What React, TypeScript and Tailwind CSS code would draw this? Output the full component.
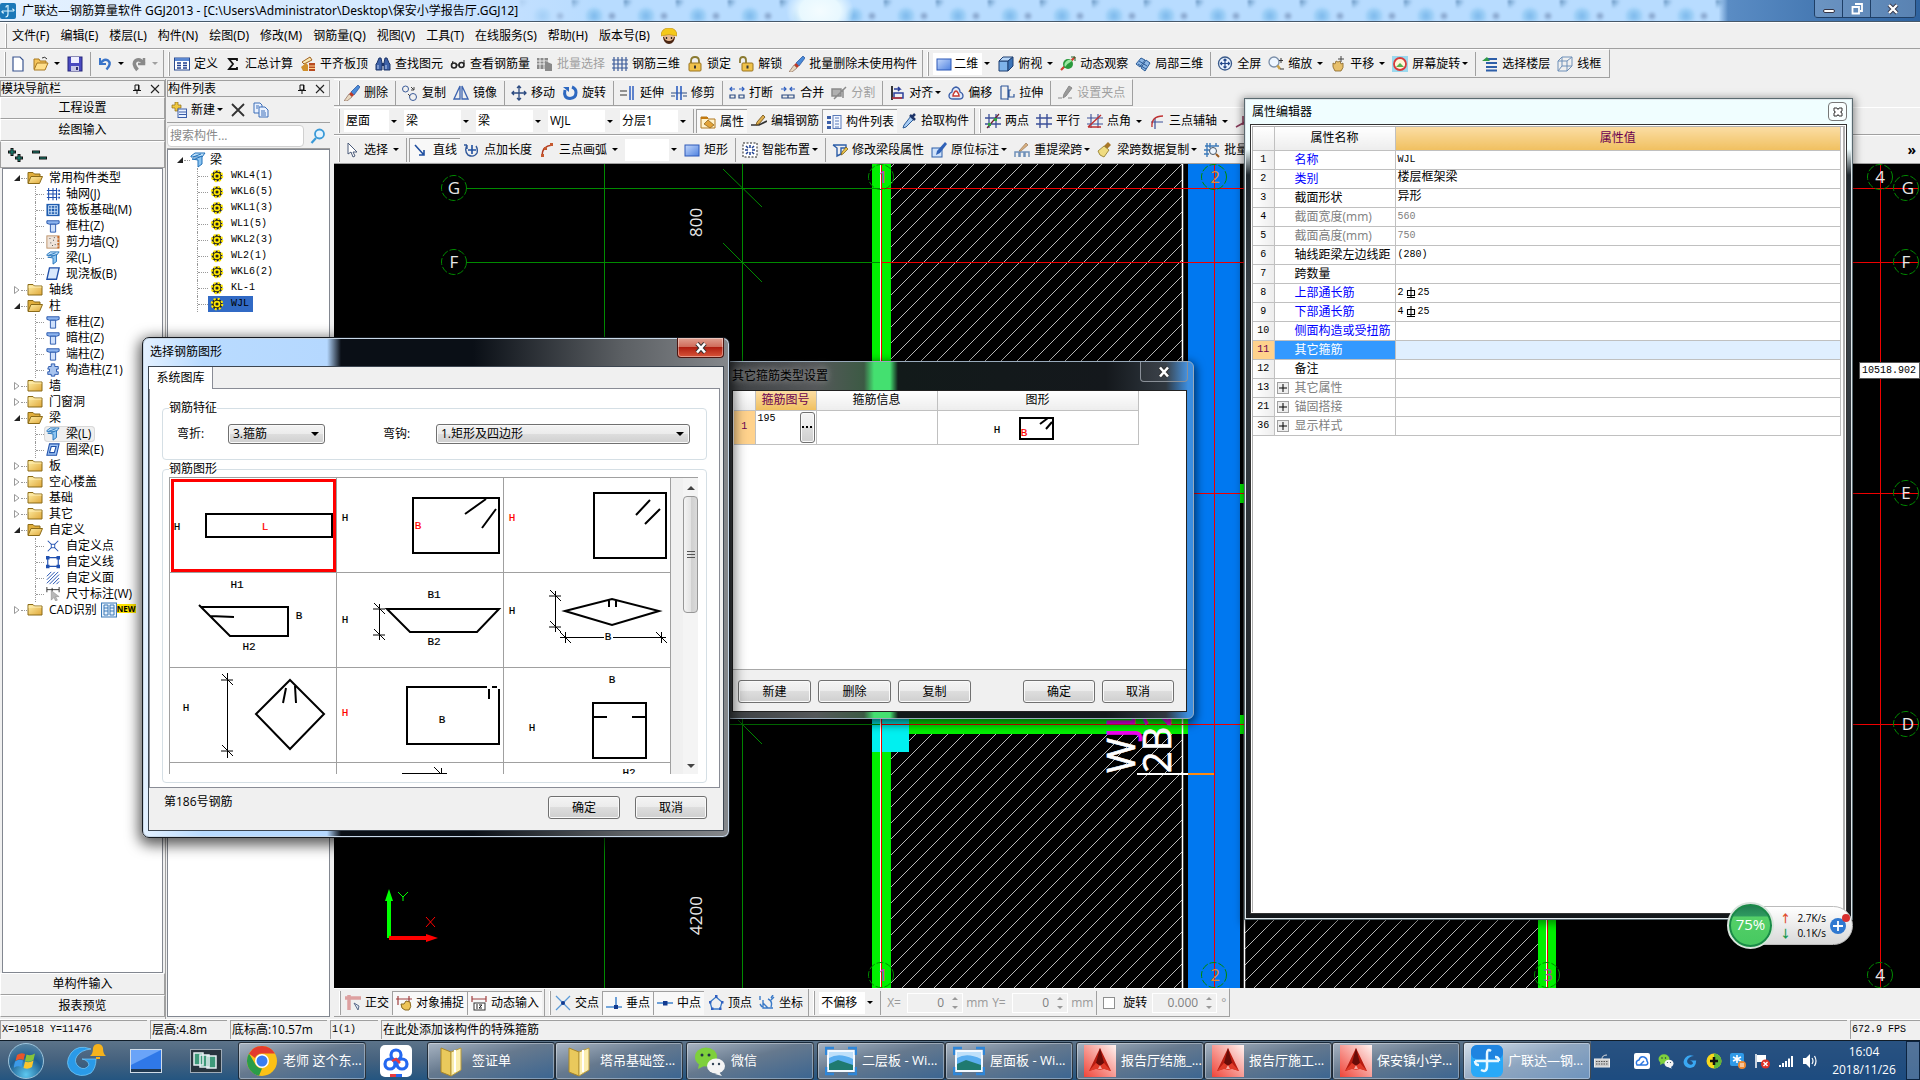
import React, { useState } from "react";
import type { ReactNode } from "react";

const blue = "#2f5fc0";
const L = (d: string, c = "#1f3f8f", w = 1.3) => <path d={d} stroke={c} strokeWidth={w} fill="none" />;

const icons: Record<string, ReactNode> = {
  logo: (<><rect width="16" height="16" rx="2" fill="#1b78b8" /><path d="M8 2.500q-2 0-2 2M8 2v9q0 3-2.500 3M2 8h12M2 8q0 2 2 2M14 8q0-2-2-2" stroke="#d6f2ff" strokeWidth="1.200" fill="none" /></>),
  new: <path d="M3 1h7l3 3v11H3z" fill="#fff" stroke="#3a5590" strokeWidth="1.200" />,
  open: (<><path d="M1 13V3h5l1 2h6v3" fill="#f5c45a" stroke="#a87820" /><path d="M1 14l3-7h11l-3 7z" fill="#ffdf8a" stroke="#a87820" /><path d="M9 2q3-2 5 1" stroke="#333" fill="none" /></>),
  save: (<><rect x="1" y="1" width="14" height="14" fill="#4a4ac0" stroke="#25257a" /><rect x="4" y="1" width="8" height="6" fill="#eef" /><rect x="4" y="10" width="8" height="5" fill="#c8c8e8" /><rect x="9" y="11" width="2" height="3" fill="#336" /></>),
  undo: (<><path d="M3 2v6h6" stroke="#3a74c8" strokeWidth="2" fill="none" /><path d="M3 8q4-6 8-3.500q4 3-1.500 9" stroke="#3a74c8" strokeWidth="2.400" fill="none" /></>),
  redo: (<><path d="M13 2v6H7" stroke="#8a8a8a" strokeWidth="2.500" fill="none" /><path d="M13 8Q9 2 5 4.500Q1 7.500 6.500 14" stroke="#8a8a8a" strokeWidth="3.500" fill="none" /></>),
  define: (<><rect x="0.500" y="2" width="15" height="12" fill="#fff" stroke="#2a4a90" /><rect x="1" y="2" width="14" height="3" fill="#5a86d0" />{L("M3 7h4M3 9.500h4M3 12h4M9 7h4M9 9.500h4M9 12h4")}</>),
  sigma: <path d="M12 5V3H4l4 5-4 5h8v-2" stroke="#111" strokeWidth="1.800" fill="none" />,
  flat: (<><path d="M2 6l8-5 2 3-8 4z" fill="#f7e7b0" stroke="#a06020" /><path d="M1 11l5-4 2 2v6H3z" fill="#d0902c" /><rect x="9" y="7" width="6" height="8" fill="#b84a20" /><path d="M9 10h6M9 12.500h6" stroke="#ffd28c" /></>),
  find: (<><path d="M2 7l2-5h2l1 5v7H1V8zM14 7l-2-5h-2L9 7v7h6V8z" fill="#3e62a8" stroke="#1c3468" /><path d="M7 7h2v3H7z" fill="#1c3468" /><path d="M3 9v4M11 9v4" stroke="#bcd0f4" /></>),
  glasses: (<><circle cx="4" cy="9.500" r="2.500" fill="none" stroke="#222" strokeWidth="1.600" /><circle cx="11.500" cy="9" r="2.500" fill="none" stroke="#222" strokeWidth="1.600" /><path d="M6.500 9h2.500M14 8V4M2 8l1-3" stroke="#222" /></>),
  batchsel: (<><path d="M0 2h11v11H0z" fill="#8a8a8a" /><path d="M0 5h11M0 8h11M3 2v11M7 2v11" stroke="#eee" /><path d="M8 5v10h7V8z" fill="#8a8a8a" /></>),
  grid3d: L("M2 1v14M6 1v14M10 1v14M14 1v14M0 4h16M0 8h16M0 12h16", "#3b5a98", 1.2),
  lock: (<><path d="M4 8V5q0-4 4-4t4 4v3" stroke="#8a7a30" strokeWidth="1.800" fill="none" /><rect x="2" y="7" width="12" height="8" rx="1" fill="#f0c24a" stroke="#9a7420" /><path d="M8 9.500v3" stroke="#333" strokeWidth="2" /></>),
  unlock: (<><path d="M2 7V4q0-3 3-3t3 3v3" stroke="#8a7a30" strokeWidth="1.800" fill="none" /><rect x="4" y="7" width="11" height="8" rx="1" fill="#f0c24a" stroke="#9a7420" /><path d="M9.500 9.500v3" stroke="#333" strokeWidth="2" /></>),
  broom: (<><path d="M14 0l2 2-6 8-3-3z" fill="#4a8ad8" stroke="#234f9a" strokeWidth="0.700" /><path d="M7 7l3 3-2 2-3-3z" fill="#c03a28" /><path d="M5 9l3 3-5 4H0z" fill="#e8d8c0" stroke="#8b6a5a" strokeWidth="0.700" /></>),
  square: <rect x="1" y="3" width="14" height="11" fill="url(#sqg)" stroke="#2c58b8" />,
  cube: (<><path d="M1 5h9v10H1z" fill="#7fb3ea" stroke="#1f3f70" /><path d="M1 5l4-4h10l-5 4z" fill="#b7d6f7" stroke="#1f3f70" /><path d="M10 5l5-4v9l-5 5z" fill="#3c74b8" stroke="#1f3f70" /></>),
  orbit: (<><path d="M1 14L6 9M10 6l5-5" stroke="#d04030" strokeWidth="2.200" /><circle cx="8" cy="8" r="5" fill="#2a9a3c" /><path d="M5 11Q3 7 8 4q4-1 4 1-4 2-7 6z" fill="#9ae8a0" /><path d="M11 1h4v4" stroke="#206a30" fill="none" /></>),
  part3d: (<><path d="M1 8l5-6 4 2-5 7zM6 12l5-8 4 3-5 8z" fill="#8db6e4" stroke="#2b5c98" /><path d="M4 5l8 5M3 8l8 5" stroke="#2b5c98" /></>),
  full: (<><circle cx="8" cy="7.500" r="6.500" fill="#eaf3ff" stroke="#3a5a8a" strokeWidth="1.300" /><path d="M8 3v9M3.500 7.500h9M6.500 4.500L8 3l1.500 1.500M6.500 10.500L8 12l1.500-1.500M5 6L3.500 7.500 5 9M11 6l1.500 1.500L11 9" stroke="#24488a" fill="none" strokeWidth="1.200" /></>),
  zoom: (<><circle cx="6" cy="6" r="5" fill="#eef6ff" stroke="#7a8ea8" strokeWidth="1.300" /><path d="M9.500 9.500L12 13" stroke="#caa24a" strokeWidth="2.500" /><path d="M13 2v5M11 4.500h4M12 13h4" stroke="#333" /></>),
  pan: (<><path d="M3 7q-1 4 2 8h6q3-3 2-8l-2 1-1-3-2 1-2-1-1 3z" fill="#e7bf6a" stroke="#87652a" strokeWidth="0.800" /><path d="M11 0v6M8 3h6" stroke="#444" /></>),
  rotscr: (<><rect width="16" height="16" fill="#9ad8ee" /><circle cx="8" cy="8" r="6" fill="#fff7d8" stroke="#d83a3a" strokeWidth="1.800" /><path d="M4 11l4-4 4 4z" fill="#58b050" /></>),
  floors: (<><path d="M4 2h11v2H4zM4 6h11v2H4zM4 10h11v2H4zM4 13.500h11v2H4z" fill="#2d5ea8" /><path d="M0 5l5-4 3 4z" fill="#2f9a48" /></>),
  wire: L("M1 5h9v10H1zM1 5l4-4h10l-5 4M15 1v9l-5 5M5 1v9h10M5 10l-4 5", "#6f90b8", 1),
  copy: (<><circle cx="3.500" cy="4" r="3" fill="none" stroke="#3a5a98" /><circle cx="11" cy="12" r="3.500" fill="none" stroke="#3a5a98" /><path d="M6 9l2 2M9 2l3 3h-3M12 5V2" stroke="#444" fill="none" /></>),
  mirror: L("M7 1v13H1zM9 1v13h6z", "#3d64b0", 1.3),
  move: L("M8 1v14M1 8h14M6 3l2-2 2 2M6 13l2 2 2-2M3 6L1 8l2 2M13 6l2 2-2 2", "#2b4a80", 1.3),
  rotate: (<><path d="M3 5q-2 8 5 8.500 6-.5 6-6 0-4-4-5.500" stroke="#2d68c0" strokeWidth="3" fill="none" /><path d="M1 2h6v5z" fill="#2d68c0" /></>),
  extend: (<>{L("M0 6h7M0 10h7", "#333", 1.2)}{L("M10 1v14M13 1v14", blue, 1.5)}</>),
  trim: (<>{L("M0 8h16M0 11h4M12 11h4", "#2b4a80", 1.2)}{L("M6 1v14M10 1v14", blue, 1.6)}</>),
  brk: (<>{L("M1 4h5M3 2L1 4l2 2M10 4h5M13 2l2 2-2 2", blue, 1.2)}{L("M1 10h5v3H1zM10 10h5v3h-5z", "#2b4a80", 1.2)}</>),
  merge: (<>{L("M1 4h5M4 2l2 2-2 2M10 4h5M12 2l-2 2 2 2", blue, 1.2)}{L("M2 10h6v3H2zM8 10h6v3H8z", "#2b4a80", 1.2)}</>),
  split: <path d="M1 4h9v7H1zM3 14L15 2M12 4v9" stroke="#8a8a8a" fill="#b0b0b0" strokeWidth="1.500" />,
  align: (<>{L("M3 1v14", "#222", 1.8)}{L("M5 8h9v5H5zM5 4h6l-2-2M11 4L9 6", "#2b3f9a", 1.5)}{L("M3 13h10", "#c03030", 1.5)}</>),
  offset: (<><path d="M1 11q0-3 3-4 0-4 4-5 4 1 4 5 3 1 3 4 0 3-4 3H5q-4 0-4-3z" fill="#dfe9fa" stroke="#3c5fa8" strokeWidth="1.300" /><path d="M5 11q0-2 1-3 1-2 2-2t2 2q1 1 1 3z" fill="#fff" stroke="#c83a30" strokeWidth="1.500" /></>),
  stretch: L("M2 1h7v3M2 1v13h7M12 5l-2 0v7h5v-3M9 1v14", "#2f579a", 1.2),
  grip: <path d="M1 13h4M11 13h4M12 1l3 2-6 8-3 2 1-4z" stroke="#8a8a8a" fill="#9a9a9a" />,
  prop: (<><path d="M1 14V3h6l1 2h7v9z" fill="#fff2cc" stroke="#b07820" /><path d="M1 4h7" stroke="#c47a10" strokeWidth="2" /><path d="M4 10l4-4 6 5-4 3z" fill="#e2a33a" stroke="#855a10" strokeWidth="0.700" /></>),
  editbar: (<><path d="M0 12h8l8-4" stroke="#333" strokeWidth="1.600" fill="none" /><path d="M12 2l2 2-6 7-3 1 1-3z" fill="#e0b050" stroke="#6a4a10" strokeWidth="0.800" /></>),
  list: (<><path d="M1 2h4v3H1zM1 7h4v3H1zM1 12h4v3H1z" fill="#3c5fa8" /><rect x="7" y="1.500" width="8" height="13" fill="#f3f7ff" stroke="#5a7ab8" />{L("M9 4h4M9 7h4M9 10h4M9 13h4", "#5a7ab8", 1)}</>),
  pick: (<><path d="M10 3l3 3-8 8-3 1 1-3z" fill="#a8ccf4" stroke="#2b5c98" /><path d="M9 2l5 5M11 4l3-3" stroke="#1c3468" strokeWidth="2.500" /></>),
  two: (<>{L("M4 1v14M11 1v14M0 5h16M0 11h16", "#3b4f98", 1.3)}{L("M2 15L14 1", "#6a2030", 1.2)}<path d="M9 5h3v3H9zM3 10h3v3H3z" fill="#30a040" /></>),
  parallel: L("M4 1v14M11 1v14M0 5h16M0 11h16", "#3b4f98", 1.4),
  angle: (<>{L("M4 1v14M11 1v14M0 5h16M0 11h16", "#3b4f98", 1.1)}{L("M1 14L14 2M1 14h13", "#c03030", 1.4)}</>),
  arcaxis: (<>{L("M2 9h12M6 5v11", "#3b4f98", 1.2)}{L("M3 14Q2 3 14 3", "#c03030", 1.4)}</>),
  delaxis: L("M1 14L10 9M8 12V3", "#8a3a5a", 1.5),
  cursor: <path d="M4 1v11l3-2 2 5 2-1-2-4h4z" fill="#fff" stroke="#4a5a78" />,
  line: (<>{L("M2 3l9 10M11 8v5H6", "#1f4fa0", 1.6)}</>),
  ptlen: (<>{L("M8 3v9M4 8h8", "#1f4fa0", 1.6)}{L("M3 3Q0 9 4 13q6 3 9-2 1-4-1-7M3 3v4M3 3H0", "#2f579a", 1.4)}</>),
  arc: (<>{L("M3 14Q3 4 13 3", "#b03a20", 1.6)}<path d="M2 12h3v3H2zM11 1h3v3h-3zM5 5h3v3H5z" fill="#c65a30" /></>),
  smart: (<><rect x="1" y="1" width="14" height="14" fill="#fff" stroke="#222" strokeDasharray="2 1.500" /><path d="M8 3v3M8 10v3M3 8h3M10 8h3M4 4l2 2M12 4l-2 2M4 12l2-2M12 12l-2-2" stroke="#1f3f8f" strokeWidth="1.500" /></>),
  modbeam: (<>{L("M1 3h13v3H9v6l-4 2V6L1 3", "#2d5ea8", 1.4)}<path d="M14 5l2 2-5 5-2 1 1-3z" fill="#e8c24a" stroke="#735410" strokeWidth="0.700" /></>),
  note: (<><rect x="1" y="6" width="10" height="9" fill="#cfe2fa" stroke="#2d5ea8" /><path d="M14 0l2 2-7 9-4 2 1-4z" fill="#2f62b8" /></>),
  respan: (<>{L("M1 15v-5h4v5M6 15v-5h4v5M11 15v-5h4v5", "#6f90b8", 1.5)}<path d="M12 1l2 2-7 6-2 0z" fill="#d9b080" stroke="#8a6a4a" strokeWidth="0.600" /></>),
  paint: (<><path d="M11 0l3 3-4 4-3-3z" fill="#a87828" /><path d="M7 4l5 4-5 7q-5-1-6-6z" fill="#f0dc80" stroke="#8b7628" strokeWidth="0.800" /></>),
  recog: (<>{L("M1 4h14M3 1v14M6 1v5M12 1v3M0 8h6M0 12h5", "#3c79b8", 1.4)}<circle cx="9" cy="9" r="3.500" fill="#eef6ff" stroke="#456" /><path d="M12 12l3 3" stroke="#9a5a20" strokeWidth="2" /></>),
  ortho: (<><path d="M0 3h16M4 0v15" stroke="#dda0a0" strokeWidth="3.500" /><path d="M9 8l4 7 1-4z" fill="#e0e8f4" stroke="#5a6a88" /></>),
  snap: (<>{L("M2 1v9M13 1v9M0 4h16", "#a04040", 1.2)}<path d="M5 9q0 5 4 6h4q3-3 1-8l-4-1-2 3z" fill="#edc458" stroke="#8a6a20" /></>),
  dyn: (<>{L("M1 1v6M15 1v6M1 4h14", "#a04040", 1.2)}<rect x="3" y="8" width="11" height="7" fill="#fff" stroke="#333" />{L("M6 9v5M8 10h3l-3 3h3", "#222", 1)}</>),
  cross: (<>{L("M1 1l14 14M15 1L1 15", "#5a9ad8", 1.3)}<circle cx="8" cy="8" r="2" fill="#123a90" /></>),
  perp: (<>{L("M0 12h16M10 2v10", "#4a8ad0", 1.6)}<rect x="8" y="10" width="4" height="4" fill="#123a90" /></>),
  mid: (<>{L("M0 8h16", "#4a8ad0", 1.6)}<rect x="6" y="6" width="4.500" height="4.500" fill="#123a90" /></>),
  vertex: (<>{L("M8 2l6 5-2 7H4L2 7z", "#3a7ac8", 1.3)}<path d="M7 0h2.500v3H7zM1 6h2.500v2.500H1zM13 6h2.500v2.500H13zM3 12.500h2.500V15H3zM11 12.500h2.500V15H11z" fill="#2f5fc0" /></>),
  coord: L("M4 5v8h10M4 8l5 5M9 4q5 2 3 8M1 1v4M14 0l-2 3M1 9l2 3M12 5l3-3", "#3a7ac8", 1.4),
  folder: (<><path d="M1 13V2.500h5L7.500 4H15v9z" fill="url(#fog)" stroke="#8a6a18" /><path d="M1.500 5h13" stroke="#fff0b8" /></>),
  folderOpen: (<><path d="M1 13V2.500h5L7.500 4H13v3" fill="#e0ae3c" stroke="#8a6a18" /><path d="M1 13.500l3-7h11.500l-3 7z" fill="url(#fog)" stroke="#8a6a18" /></>),
  axisgrid: (<>{L("M3 1v14M8 1v14M12 1v14M1 4h12M1 8h12M1 12h12", "#2050b0", 1.2)}<path d="M14 3h2v2h-2zM14 7h2v2h-2zM14 11h2v2h-2z" fill="#2050b0" /></>),
  raft: (<><rect x="0.500" y="1" width="15" height="14" fill="#1f5cae" /><path d="M3 3h10v10H3zM6 3v10M10 3v10M3 6h10M3 10h10" stroke="#d8ecff" fill="none" /></>),
  column: (<><path d="M1 2h14v3l-3 1H4L1 5z" fill="#8db4ee" stroke="#1f4fa8" /><path d="M5 6h6v9H5z" fill="#cfe0fb" stroke="#1f4fa8" /></>),
  wall: (<><rect x="1" y="1" width="14" height="14" fill="#efe4da" stroke="#b88a60" /><path d="M4 4h1M8 6h1M5 9h1M10 11h1M7 12h1M9 3h1" stroke="#333" /><path d="M14 1v14" stroke="#c86a28" strokeWidth="2" strokeDasharray="3 1" /></>),
  beam: (<><path d="M1 4l4-3h10l-3 4H1z" fill="#bfe0fa" stroke="#2070b8" /><path d="M5 7l7-3v8l-4 3V8L2 7z" fill="#8cc4f0" stroke="#2070b8" /><path d="M3 5l8-3" stroke="#2070b8" /></>),
  slab: <path d="M4 1h11l-3 13H1z" fill="#d8e8fc" stroke="#1f4fa8" strokeWidth="1.500" />,
  ring: <path d="M4 1h11l-3 13H1zM6 4h5.500l-2 7H4z" fill="#9fc4f4" fillRule="evenodd" stroke="#1f4fa8" strokeWidth="1.200" />,
  struct: <path d="M3 4h3V1h4v3h4v3h-2v3h2v3h-4v2H6v-2H2v-3h2V7H2z" fill="#a8c4ee" stroke="#1f4fa8" />,
  cpoint: (<>{L("M2 2l12 12M14 2L2 14", "#2050b0", 1.2)}<rect x="6" y="6" width="4" height="4" fill="#fff" stroke="#2050b0" /></>),
  cline: (<>{L("M2 3h12v10H2z", "#2050b0", 1.3)}<path d="M0 1h4v4H0zM12 1h4v4h-4zM0 11h4v4H0zM12 11h4v4h-4z" fill="#2050b0" /></>),
  carea: L("M1 6l5-5M1 10l9-9M1 14l13-13M4 15l11-11M8 15l7-7M12 15l3-3", "#2050b0", 1.1),
  dim: (<>{L("M1 0v6M15 0v6M1 3h14M7 1v4", "#222", 1)}<path d="M6 4v11l3-3 2 4 2-1-2-4h4z" fill="#b8b8b8" stroke="#888" strokeWidth="0.600" /></>),
  gear: (<><circle cx="8" cy="8" r="5" fill="#ffe800" stroke="#222" strokeWidth="2.400" /><circle cx="8" cy="8" r="6" fill="none" stroke="#ffe800" strokeWidth="2.400" strokeDasharray="2.400 2.310" /><circle cx="8" cy="8" r="1.800" fill="#222" /></>),
  addcomp: (<><path d="M4 0h3v3h3v3H7v3H4V6H1V3h3z" fill="#f0c840" stroke="#8a6a18" strokeWidth="0.700" /><rect x="7" y="7" width="8.500" height="8.500" fill="#eaf2ff" stroke="#3c5fa8" />{L("M8 10h7M8 12.500h7", "#3c5fa8", 1)}</>),
  delx: L("M2 2l12 12M14 2L2 14", "#333", 1.8),
  pages: (<><path d="M1 1h6l2 2v8H1z" fill="#eaf2ff" stroke="#3c6fb8" /><path d="M6 5h6l3 3v7H6z" fill="#eaf2ff" stroke="#3c6fb8" /><path d="M8 9h4M8 11h5M8 13h5M3 4h3M3 6h2" stroke="#3c6fb8" /></>),
  worker: (<><circle cx="8" cy="9" r="6" fill="#e8b890" /><path d="M2 9q1 7 6 7t6-7l-1 0q-1 4-5 4t-5-4z" fill="#4a2614" /><path d="M0 8Q0 0 8 0t8 8l-8-1.500z" fill="#f4c81a" stroke="#b88a10" strokeWidth="0.600" /><path d="M5.500 9v2M10.500 9v2" stroke="#222" strokeWidth="1.300" /></>),
};

function Icon({ n, s = "size-4" }: { n: string; s?: string }) {
  return <svg viewBox="0 0 16 16" className={`${s} shrink-0`} aria-hidden="true">{icons[n]}</svg>;
}
const Arrow = ({ c = "border-t-black" }: { c?: string }) => (
  <span className={`inline-block h-0 w-0 shrink-0 border-x-[3px] border-t-[3px] border-x-transparent ${c}`} />
);
const Sep = () => <span className="mr-1.5 h-6 w-px shrink-0 bg-[#a0a0a0]" />;
const Edge = () => <span className="-ml-0.5 h-full w-px shrink-0 bg-[#a0a0a0]" />;
const Grip = () => <span className="mx-1 h-6 w-0.5 shrink-0 border-r border-r-[#a0a0a0] bg-white" />;

function Tool({ i, t, arrow, tight, pressed, off }: { i: string; t?: string; arrow?: boolean; tight?: boolean; pressed?: boolean; off?: boolean }) {
  return (
    <button
      disabled={off}
      aria-label={t ?? i}
      className={`flex h-6 shrink-0 items-center gap-1 whitespace-nowrap ${pressed ? "-ml-1 mr-1 border-t border-l border-[#a0a0a0] bg-[#f8f8f8] pl-[3px] pr-[3px]" : "pr-[7px]"} ${off ? "text-[#a0a0a0]" : ""}`}
    >
      <Icon n={i} />
      {t && <span>{t}</span>}
      {arrow && <span className={`flex w-[7px] justify-center ${tight ? "-ml-[3px]" : ""}`}><Arrow c={off ? "border-t-[#a0a0a0]" : "border-t-black"} /></span>}
    </button>
  );
}

function Combo({ label, options, w, gap = "mr-[5px]" }: { label: string; options: string[]; w: string; gap?: string }) {
  return (
    <label className={`relative flex h-[22px] shrink-0 items-center bg-white ${gap} ${w}`}>
      <span className="sr-only">{label}</span>
      <select className="h-[22px] w-full appearance-none bg-transparent pl-0.5 leading-[22px] outline-none">
        {options.map((o) => <option key={o}>{o}</option>)}
      </select>
      <span className="pointer-events-none absolute inset-y-0 right-0 flex w-2.5 items-center justify-center bg-[#f0f0f0]"><Arrow /></span>
    </label>
  );
}

const bar = "flex items-center border-t border-b border-t-white border-b-[#a0a0a0] bg-[#f0f0f0]";
const winBtn = "rounded-[3px] border border-[#707070] bg-[linear-gradient(#f4f4f4_0%,#ebebeb_49%,#dddddd_50%,#cfcfcf_100%)] shadow-[inset_0_0_0_1px_#fafafa]";

function TitleBar() {
  return (
    <header className="relative flex h-[22px] shrink-0 items-center overflow-hidden border-b border-[#46586a] bg-[#b8dcff]">
      <div className="absolute inset-0 bg-[radial-gradient(circle_at_22px_16px,#7db9ec_0,#9acdf6_6px,transparent_10px),radial-gradient(circle_at_0_0,#5a86b4_0,#92bce4_5px,transparent_9px),radial-gradient(circle_at_40px_16px,#7f9cc4_0,transparent_5px)] bg-[length:52px_22px] blur-[1px]" />
      <div className="absolute inset-0 bg-[radial-gradient(ellipse_34px_26px_at_820px_11px,#f4fcff_0,#e8f8ff_60%,transparent_100%),linear-gradient(90deg,#e4f1ff_0,#d4e9ff_20%,#c4e0ff_26%,transparent_31%,transparent_89.500%,#5a8cc4_90%,#2f639f_100%)]" />
      <div className="relative flex items-center gap-1.5"><Icon n="logo" /><h1 className='font-["Noto_Sans","Noto_Sans_CJK_SC",sans-serif] text-xs whitespace-nowrap'>广联达—钢筋算量软件 GGJ2013 - [C:\Users\Administrator\Desktop\保安小学报告厅.GGJ12]</h1></div>
      <div className="absolute top-0 right-1 flex h-[18px] rounded-b border border-t-0 border-[#1f3f66] text-white">
        <button aria-label="最小化" className="flex w-7 items-center justify-center border-r border-[#1f3f66] bg-white/20"><span className="mt-1 h-1 w-3 rounded-sm border border-[#334] bg-white" /></button>
        <button aria-label="还原" className="flex w-7 items-center justify-center border-r border-[#1f3f66] bg-white/20"><svg viewBox="0 0 12 12" className="size-3"><path d="M4 1h7v7H9M1.500 4h6.500v6.500H1.500z" stroke="#fff" strokeWidth="1.800" fill="none" /></svg></button>
        <button aria-label="关闭" className="flex w-11 items-center justify-center bg-white/20"><svg viewBox="0 0 12 12" className="size-3"><path d="M2 2l8 8M10 2l-8 8" stroke="#334" strokeWidth="4" /><path d="M2 2l8 8M10 2l-8 8" stroke="#fff" strokeWidth="2.400" /></svg></button>
      </div>
    </header>
  );
}

const menus = ["文件(F)", "编辑(E)", "楼层(L)", "构件(N)", "绘图(D)", "修改(M)", "钢筋量(Q)", "视图(V)", "工具(T)", "在线服务(S)", "帮助(H)", "版本号(B)"];

type Node = { d: number; i?: string; t: string; open?: boolean; sel?: boolean };
const nav: Node[] = [
  { d: 0, t: "常用构件类型", open: true }, { d: 1, i: "axisgrid", t: "轴网(J)" }, { d: 1, i: "raft", t: "筏板基础(M)" }, { d: 1, i: "column", t: "框柱(Z)" }, { d: 1, i: "wall", t: "剪力墙(Q)" }, { d: 1, i: "beam", t: "梁(L)" }, { d: 1, i: "slab", t: "现浇板(B)" },
  { d: 0, t: "轴线" }, { d: 0, t: "柱", open: true }, { d: 1, i: "column", t: "框柱(Z)" }, { d: 1, i: "column", t: "暗柱(Z)" }, { d: 1, i: "column", t: "端柱(Z)" }, { d: 1, i: "struct", t: "构造柱(Z1)" },
  { d: 0, t: "墙" }, { d: 0, t: "门窗洞" }, { d: 0, t: "梁", open: true }, { d: 1, i: "beam", t: "梁(L)", sel: true }, { d: 1, i: "ring", t: "圈梁(E)" },
  { d: 0, t: "板" }, { d: 0, t: "空心楼盖" }, { d: 0, t: "基础" }, { d: 0, t: "其它" }, { d: 0, t: "自定义", open: true }, { d: 1, i: "cpoint", t: "自定义点" }, { d: 1, i: "cline", t: "自定义线" }, { d: 1, i: "carea", t: "自定义面" }, { d: 1, i: "dim", t: "尺寸标注(W)" },
  { d: 0, t: "CAD识别" },
];

const Expander = ({ open }: { open?: boolean }) => (
  <svg viewBox="0 0 8 10" className="h-2.5 w-2 shrink-0">{open ? <path d="M7 2v6H1z" fill="#222" /> : <path d="M1.500 1.500v7L6 5z" fill="#fff" stroke="#999" />}</svg>
);

function PanelTitle({ t }: { t: string }) {
  return (
    <div className="flex h-[17px] shrink-0 items-center border border-[#a0a0a0] bg-[#f0f0f0]">
      <h2 className="flex-1 text-xs leading-[15px] whitespace-nowrap">{t}</h2>
      <button aria-label="固定" className="mr-2"><svg viewBox="0 0 10 10" className="size-2.5"><path d="M3 1h4v5H3zM1 6.500h8M5 6.500V10M6.500 1v5" stroke="#111" fill="none" /></svg></button>
      <button aria-label="关闭" className="mr-1"><svg viewBox="0 0 10 10" className="size-2.5"><path d="M1 1l8 8M9 1L1 9" stroke="#222" strokeWidth="1.100" /></svg></button>
    </div>
  );
}
const navBtn = "h-[22px] w-full shrink-0 border border-[#a0a0a0] border-t-white border-l-white bg-[#f0f0f0] text-center";

function NavPanel() {
  return (
    <aside className="flex w-[166px] shrink-0 flex-col border-r border-[#a0a0a0] bg-[#f0f0f0] pt-px pb-0.5">
      <PanelTitle t="模块导航栏" />
      <button className={navBtn}>工程设置</button>
      <button className={navBtn}>绘图输入</button>
      <div className="flex h-[27px] shrink-0 items-center gap-1.5 border border-[#a0a0a0] border-t-white pl-1.5">
        <button aria-label="全部展开"><svg viewBox="0 0 18 16" className="h-4 w-[18px]"><path d="M5 1v8M1 5h8M12 7v8M8 11h8" stroke="#111" strokeWidth="3" /><path d="M5 2v6M2 5h6M12 8v6M9 11h6" stroke="#1a8a7a" strokeWidth="1.200" /></svg></button>
        <button aria-label="全部折叠"><svg viewBox="0 0 18 16" className="h-4 w-[18px]"><path d="M1 5h8M8 11h8" stroke="#111" strokeWidth="3" /><path d="M2 5h6M9 11h6" stroke="#1a8a7a" strokeWidth="1.200" /></svg></button>
      </div>
      <ul className="mx-0.5 flex-1 overflow-hidden border border-[#828790] bg-white pt-px">
        {nav.map((n, k) => (
          <li key={k} className="flex h-4 items-center">
            {n.d === 0 ? (
              <button className="flex h-4 items-center pl-2.5"><Expander open={n.open} /><span className="w-1.5 border-b border-dotted border-[#999]" /><Icon n={n.open ? "folderOpen" : "folder"} /><span className="ml-1.5">{n.t}</span>
                {n.t === "CAD识别" && <><svg viewBox="0 0 16 16" className="ml-1 size-4"><rect x="0.500" y="1" width="15" height="14" fill="#e8f2fc" stroke="#3c7ab8" /><path d="M3 3h4v10H3zM9 3h4v10H9zM3 6h4M3 9h4M9 6h4M9 9h4" stroke="#3c7ab8" fill="none" /></svg><b className="mb-1 bg-[#ffe400] text-[8px] leading-[9px]">NEW</b></>}
              </button>
            ) : (
              <span className="ml-8 flex h-4 items-center"><span className="h-4 w-px border-l border-dotted border-[#999]" /><span className="w-2 border-b border-dotted border-[#999]" />
                <button className={`flex h-4 items-center pl-0.5 pr-1 ${n.sel ? "rounded-sm bg-[#f0f0f0] shadow-[inset_0_0_0_1px_#d9d9d9]" : ""}`}><Icon n={n.i!} s="size-3.5" /><span className="ml-1.5 whitespace-nowrap">{n.t}</span></button></span>
            )}
          </li>
        ))}
      </ul>
      <button className={navBtn}>单构件输入</button>
      <button className={navBtn}>报表预览</button>
    </aside>
  );
}

const comps = ["WKL4(1)", "WKL6(5)", "WKL1(3)", "WL1(5)", "WKL2(3)", "WL2(1)", "WKL6(2)", "KL-1", "WJL"];
const mono = 'font-["Liberation_Mono","Noto_Sans_CJK_SC",monospace] text-[10px]';

function ListPanel() {
  const [sel, setSel] = useState("WJL");
  return (
    <aside className="flex w-[168px] shrink-0 flex-col border-r-4 border-r-[#f0f0f0] bg-[#f0f0f0] pt-px pb-0.5 pl-px">
      <PanelTitle t="构件列表" />
      <div className="flex h-[26px] shrink-0 items-center border-b border-[#a0a0a0] pl-1">
        <Tool i="addcomp" t="新建" arrow tight />
        <Tool i="delx" /><Tool i="pages" />
      </div>
      <div className="flex h-[26px] shrink-0 items-center border-b border-[#a0a0a0]">
        <input aria-label="搜索构件" placeholder="搜索构件..." className="h-[22px] w-[137px] rounded-sm border border-[#d0d0d0] bg-white px-0.5 text-xs placeholder:text-[#888]" />
        <button aria-label="搜索" className="ml-1.5"><svg viewBox="0 0 16 16" className="size-4"><circle cx="9.500" cy="6" r="4.500" fill="#e4f4ff" stroke="#3a9ad8" strokeWidth="1.800" /><path d="M6 10l-4.500 5" stroke="#3a9ad8" strokeWidth="2.200" /></svg></button>
      </div>
      <ul className="flex-1 overflow-hidden border border-[#828790] bg-white pt-0.5">
        <li className="flex h-4 items-center pl-2"><Expander open /><span className="w-1.5 border-b border-dotted border-[#999]" /><Icon n="beam" /><span className="ml-1">梁</span></li>
        {comps.map((c) => (
          <li key={c} className="ml-[29px] flex h-4 items-center">
            <span className="h-4 border-l border-dotted border-[#999]" /><span className="w-2.5 border-b border-dotted border-[#999]" />
            <button onClick={() => setSel(c)} className={`flex h-4 items-center gap-[7px] pr-1 pl-0.5 ${mono} ${sel === c ? "bg-[#316ac5]" : ""}`}><Icon n="gear" s="size-3.5" />{c}</button>
          </li>
        ))}
      </ul>
    </aside>
  );
}

function Bubble({ x, y, t, c = "#e8e8e8", dx = 0 }: { x: number; y: number; t: string; c?: string; dx?: number }) {
  return (
    <g>
      <circle cx={x} cy={y} r="12.500" fill="none" stroke="#008a00" strokeDasharray="7 2" />
      <text x={x + dx} y={y + 6} textAnchor="middle" fontSize="17" fill={c}>{t}</text>
    </g>
  );
}

function Canvas() {
  return (
    <div className="relative min-h-0 flex-1 overflow-hidden bg-black">
      <svg className='absolute inset-0 h-full w-full font-["Open_Sans",sans-serif]' aria-label="平面图">
        <defs>
          <pattern id="hatch" width="16" height="16" patternUnits="userSpaceOnUse" patternTransform="translate(2 0)">
            <path d="M-1 17L17 -1M-1 1L1 -1M15 17L17 15" stroke="#b8b8b8" strokeWidth="1" />
          </pattern>
        </defs>
        <g transform="translate(-334 -164)">
          <rect x="891" y="164" width="291" height="824" fill="url(#hatch)" />
          <rect x="1244" y="164" width="294" height="824" fill="url(#hatch)" />
          <rect x="872" y="164" width="19" height="824" fill="#00f000" />
          <rect x="891" y="715" width="353" height="19" fill="#00f000" />
          <rect x="1240" y="484" width="10" height="19" fill="#00f000" />
          <rect x="1538" y="164" width="18" height="824" fill="#00f000" />
          <rect x="1183" y="164" width="61" height="824" fill="#000" />
          <rect x="1182" y="715" width="6" height="19" fill="#00f000" />
          <rect x="1188" y="164" width="52" height="824" fill="#0078f0" />
          <path d="M1182.500 164V988M1244.500 164V988" stroke="#fff" strokeWidth="1.500" />
          <rect x="1240" y="484" width="4" height="19" fill="#00f000" />
          <rect x="1240" y="715" width="4" height="19" fill="#00f000" />
          <rect x="872" y="715" width="37" height="37" fill="#00f0f0" />
          <path d="M604.500 164V988M742.500 164V988M466 188.500H881M466 262.500H881M466 493.500H881M466 724.500H881M723 169L762 207M723 243L762 282M738 720L762 744" stroke="#008a00" fill="none" />
          <path d="M880.500 164V988M1546.500 164V988" stroke="#fff" />
          <path d="M881.500 164V988M1547.500 164V988M1214.500 164V988M1880.500 164V988M882 188.500H1919M882 262.500H1919M882 493.500H1919M882 724.500H1919" stroke="#f00000" />
          <Bubble x={454} y={188} t="G" /><Bubble x={454} y={262} t="F" />
          <Bubble x={881} y={177} t="1" c="#c040d0" dx={2} /><Bubble x={1214} y={177} t="2" c="#e08a30" dx={1} /><Bubble x={1880} y={177} t="4" />
          <Bubble x={1906} y={188} t="G" dx={2} /><Bubble x={1906} y={262} t="F" /><Bubble x={1906} y={493} t="E" /><Bubble x={1906} y={724} t="D" dx={2} />
          <Bubble x={881} y={975} t="1" c="#c040d0" dx={2} /><Bubble x={1214} y={975} t="2" c="#e08a30" dx={1} /><Bubble x={1547} y={975} t="3" c="#a050a0" dx={1} /><Bubble x={1880} y={975} t="4" />
          <text transform="translate(702 237) rotate(-90)" fontSize="17" fill="#e8e8e8">800</text>
          <text transform="translate(702 935) rotate(-90)" fontSize="17" fill="#e8e8e8">4200</text>
          <text transform="translate(1135 773) rotate(-90)" fontSize="38" fill="#fff" stroke="#fff" strokeWidth="0.600">W<tspan fill="#f000f0" stroke="#f000f0">JL</tspan></text>
          <text transform="translate(1171 773) rotate(-90)" fontSize="38" fill="#fff" stroke="#fff" strokeWidth="0.600">2B<tspan fill="#f000f0" stroke="#f000f0">25</tspan></text>
          <path d="M1137 774H1188" stroke="#fff" strokeWidth="2" /><path d="M1188 774h26" stroke="#ff8a10" strokeWidth="2" />
          <path d="M389 938V898" stroke="#0f0" strokeWidth="4" /><path d="M389 889l4 12h-8z" fill="#0f0" />
          <path d="M389 938h38" stroke="#f00" strokeWidth="4" /><path d="M438 938l-12 4v-8z" fill="#f00" />
          <path d="M398 892l5 5 5-5M403 897v4" stroke="#0f0" fill="none" /><path d="M426 917l9 10M435 917l-9 10" stroke="#f00" fill="none" />
        </g>
      </svg>
      <div className={`absolute top-[198px] right-0 h-[17px] w-[61px] border border-[#555] bg-white pl-0.5 leading-[15px] ${mono}`}>10518.902</div>
    </div>
  );
}

const shape = { fill: "none", stroke: "#000", strokeWidth: 2 } as const;
const T = ({ x, y, t, red }: { x: number; y: number; t: string; red?: boolean }) => (
  <text x={x} y={y + 4} textAnchor="middle" fontSize="11" fill={red ? "#f00" : "#000"} stroke={red ? "#f00" : "#000"} strokeWidth="0.200" className='font-["Liberation_Mono",monospace]'>{t}</text>
);
const tickV = (x: number, ys: number[]) => ys.map((y) => `M${x - 6} ${y}h12M${x - 5} ${y - 6}l11 11`).join("");

const shapes: ReactNode[] = [
  <><rect x="36" y="36" width="126" height="23" {...shape} /><T x={7} y={48} t="H" /><T x={95} y={48} t="L" red /></>,
  <><rect x="76" y="20" width="86" height="55" {...shape} /><path d="M128 36L149 21M145 50L159 31" {...shape} /><T x={8} y={39} t="H" /><T x={81} y={47} t="B" red /></>,
  <><rect x="90" y="15" width="72" height="65" {...shape} /><path d="M132 37L146 22M141 46L156 31" {...shape} /><T x={8} y={39} t="H" red /></>,
  <><path d="M29 32L60 63H118V34H31M40 43L64 44" {...shape} /><T x={67} y={11} t="H1" /><T x={129} y={42} t="B" /><T x={79} y={73} t="H2" /></>,
  <><path d="M50 36H162L140 59H73z" {...shape} /><path d={"M42.500 31V67" + tickV(42, [36, 62])} stroke="#000" fill="none" /><T x={97} y={21} t="B1" /><T x={8} y={46} t="H" /><T x={97} y={68} t="B2" /></>,
  <><path d="M61 38L108 26 155 38 108 52zM105 27V34M112 27V34" {...shape} /><path d={"M51.500 18V59M56 64.500H162M61.500 59V70M157.500 59V70M56 59l11 11M152 59l11 11" + tickV(51, [23, 54])} stroke="#000" fill="none" /><rect x="100" y="58" width="9" height="11" fill="#fff" /><T x={8} y={37} t="H" /><T x={104} y={63} t="B" /></>,
  <><path d="M120 12L154 46 120 81 86 46zM116 20L113 35M125 18L126 35" {...shape} /><path d={"M57.500 5V90" + tickV(57, [12, 83])} stroke="#000" fill="none" /><T x={16} y={39} t="H" /></>,
  <><path d="M150 19H70V76H162V21M155 19H160M152 21V31" {...shape} /><T x={8} y={44} t="H" red /><T x={105} y={51} t="B" /></>,
  <><path d="M89 35H142V90H89zM89 49H103M128 49H142" {...shape} /><T x={108} y={11} t="B" /><T x={28} y={59} t="H" /></>,
  <></>,
  <><path d="M65 10.500H110M97 4l8 8M104.500 5V12" stroke="#000" fill="none" /></>,
  <T x={125} y={9} t="H2" />,
];

const CloseX = () => <svg viewBox="0 0 12 12" className="size-3"><path d="M2 1.500l8 9M10 1.500l-8 9" stroke="#333" strokeWidth="4.500" /><path d="M2 1.500l8 9M10 1.500l-8 9" stroke="#fff" strokeWidth="2.600" /></svg>;

function BigSelect({ id, v, w }: { id: string; v: string; w: string }) {
  return (
    <span className={`relative flex ${w}`}>
      <select id={id} className={`h-5 w-full appearance-none pl-1 leading-[18px] ${winBtn}`}><option>{v}</option></select>
      <span className="pointer-events-none absolute top-2 right-1.5 h-0 w-0 border-x-4 border-t-4 border-x-transparent border-t-black" />
    </span>
  );
}

function ShapeDialog() {
  const [sel, setSel] = useState(0);
  return (
    <section role="dialog" aria-label="选择钢筋图形" className="absolute top-[337px] left-[142px] flex h-[501px] w-[588px] flex-col rounded-[7px] border border-[#15191f] bg-[linear-gradient(90deg,#e4f1ff_0,#b9dbff_60px,#b5d8ff_184px,#0a0f16_198px,#0a0f16_330px,#5c6064_480px,#85888c_100%)] px-[5px] pb-1.5 shadow-[inset_0_0_0_1px_#c8d8e8,0_4px_14px_3px_rgba(0,0,0,0.65)]">
      <div className="flex h-7 shrink-0 items-center">
        <h2 className="flex-1 pl-0.5 text-xs">选择钢筋图形</h2>
        <button aria-label="关闭" className="flex h-5 w-[47px] items-center justify-center self-start rounded-b border border-t-0 border-[#4a1510] bg-[linear-gradient(#e0a090_0%,#cf6a58_48%,#b01f10_50%,#d8553a_100%)] shadow-[inset_0_0_0_1px_rgba(255,255,255,0.4)]"><CloseX /></button>
      </div>
      <div className="flex min-h-0 flex-1 flex-col border border-[#3c4550] bg-[#f0f0f0]">
        <div role="tablist" className="relative z-10 -mb-px flex h-[22px] shrink-0"><button role="tab" aria-selected="true" className="w-16 border-r border-[#898c95] bg-white">系统图库</button></div>
        <div className="mr-[3px] flex min-h-0 flex-1 flex-col border border-[#898c95] bg-white px-3 pt-[9px] pb-1">
          <fieldset className="h-[62px] shrink-0 rounded border border-[#d5dfe5] px-3">
            <legend className="-ml-1.5 leading-5">钢筋特征</legend>
            <div className="flex items-center pt-1.5">
              <label htmlFor="bend" className="w-[53px] pl-0.5">弯折:</label><BigSelect id="bend" v="3.箍筋" w="w-[97px]" />
              <label htmlFor="hook" className="ml-[58px] w-[53px]">弯钩:</label><BigSelect id="hook" v="1.矩形及四边形" w="w-[254px]" />
            </div>
          </fieldset>
          <fieldset className="flex min-h-0 flex-1 flex-col rounded border border-[#d5dfe5] pr-2 pb-2 pl-1.5">
            <legend className="leading-[18px]">钢筋图形</legend>
            <div className="-mt-px flex min-h-0 flex-1 overflow-hidden border-t border-l border-[#a0a0a0]">
              <div className="grid h-fit grid-cols-[167px_167px_167px] bg-white">
                {shapes.map((s, k) => (
                  <button key={k} aria-label={`图形 ${k + 1}`} onClick={() => setSel(k)} className="relative h-[95px] border-r border-b border-[#a0a0a0]">
                    <svg className="block h-full w-full">{s}</svg>
                    {sel === k && <span className="absolute top-px left-px h-[93px] w-[165px] border-3 border-[#f00]" />}
                  </button>
                ))}
              </div>
              <div className="flex-1 bg-[#f0f0f0]" />
              <div className="flex w-[15px] flex-col items-center bg-[#f4f4f4]">
                <span className="mt-2 border-x-4 border-b-4 border-x-transparent border-b-[#444]" />
                <span className="mt-1.5 flex h-[117px] w-[15px] flex-col items-center justify-center gap-0.5 rounded-sm border border-[#979797] bg-[linear-gradient(90deg,#f4f4f4,#e4e4e4_50%,#cfcfcf_51%,#dadada)]">
                  <i className="h-px w-2 bg-[#555]" /><i className="h-px w-2 bg-[#555]" /><i className="h-px w-2 bg-[#555]" />
                </span>
                <span className="mt-auto mb-1.5 border-x-4 border-t-4 border-x-transparent border-t-[#444]" />
              </div>
            </div>
          </fieldset>
        </div>
        <div className="flex h-[42px] shrink-0 items-start pr-4 pl-[15px]">
          <p className="mt-1.5 flex-1">第186号钢筋</p>
          <div className="mt-2 flex gap-[15px]"><button className={`h-[23px] w-[72px] ${winBtn}`}>确定</button><button className={`h-[23px] w-[72px] ${winBtn}`}>取消</button></div>
        </div>
      </div>
    </section>
  );
}

const head = "border-r border-b border-[#c0c0c0] bg-[linear-gradient(#fff,#ededed)] p-0 font-normal";
const hot = "border-r border-b border-[#c0c0c0] bg-[linear-gradient(#fbdda4,#f0c060)] p-0 font-normal text-[#6a0050]";

function StirrupDialog() {
  return (
    <section role="dialog" aria-label="其它箍筋类型设置" className="absolute top-[361px] left-[725px] flex h-[358px] w-[469px] flex-col rounded-[6px] border border-[#9ab] bg-[linear-gradient(90deg,#3c3f42_0,#55585a_90px,#3c5a44_138px,#44e070_148px,#44e070_164px,#121a1a_172px,#14181c_380px,#303840_440px,#3c8ee0_462px)] px-1.5 pb-1.5 shadow-[0_3px_10px_2px_rgba(0,0,0,0.6)]">
      <div className="flex h-7 shrink-0 items-center"><h2 className="flex-1 text-xs text-black [text-shadow:0_0_6px_#999,0_0_10px_#888]">其它箍筋类型设置</h2>
        <button aria-label="关闭" className="-mr-px flex h-5 w-12 items-center justify-center self-start rounded-b border border-t-0 border-[#8a9098] bg-white/5"><CloseX /></button></div>
      <div className="flex min-h-0 flex-1 flex-col border border-[#222] bg-[#f0f0f0]">
        <div className="min-h-0 flex-1 border-b border-[#a8a8a8] bg-white pl-px">
          <table className="table-fixed border-collapse">
            <thead><tr className="h-[19px]"><th className={`w-[21px] ${head}`} /><th className={`w-[61px] ${hot}`}>箍筋图号</th><th className={`w-[121px] ${head}`}>箍筋信息</th><th className={`w-[201px] ${head}`}>图形</th></tr></thead>
            <tbody><tr className="h-[34px]">
              <td className={`border-r border-b border-[#c0c0c0] bg-[#ffd28c] p-0 text-center text-[#6a0050] ${mono}`}>1</td>
              <td className="border-r border-b border-[#c0c0c0] p-0"><div className="flex h-[33px] justify-between pr-px pl-0.5"><span className={`pt-0.5 leading-3 ${mono}`}>195</span><button aria-label="选择图号" className={`mt-px h-[31px] w-[15px] ${winBtn}`}><span className="flex justify-center gap-0.5"><i className="size-0.5 bg-black" /><i className="size-0.5 bg-black" /><i className="size-0.5 bg-black" /></span></button></div></td>
              <td className="border-r border-b border-[#c0c0c0]" />
              <td className="border-r border-b border-[#c0c0c0] p-0"><svg className="block h-[33px] w-[200px]"><T x={59} y={18} t="H" /><rect x="82" y="7" width="33" height="21" {...shape} /><path d="M102 13L110 7M108 18L114 11" {...shape} /><T x={86} y={21} t="B" red /></svg></td>
            </tr></tbody>
          </table>
        </div>
        <div className="flex h-[41px] shrink-0 items-center gap-[7px] pt-0.5 pr-3 pl-[5px]">
          {["新建", "删除", "复制"].map((b) => <button key={b} className={`h-[23px] w-[73px] ${winBtn}`}>{b}</button>)}
          <span className="flex-1" />
          {["确定", "取消"].map((b) => <button key={b} className={`h-[23px] w-[72px] ${winBtn}`}>{b}</button>)}
        </div>
      </div>
    </section>
  );
}

const Rebar = ({ a, b }: { a: string; b: string }) => (
  <span className="flex items-center gap-0.5">{a}<svg viewBox="0 0 10 12" className="h-3 w-2.5"><path d="M5 0v11M1.500 3.500h7v5h-7zM1 10.500h8" stroke="#000" fill="none" strokeWidth="1.100" /></svg>{b}</span>
);
type Row = { n: number; k: string; v?: ReactNode; c?: "b" | "g"; exp?: boolean; sel?: boolean };
const rows: Row[] = [
  { n: 1, k: "名称", v: "WJL", c: "b" }, { n: 2, k: "类别", v: <span className="text-xs leading-4">楼层框架梁</span>, c: "b" }, { n: 3, k: "截面形状", v: <span className="text-xs leading-4">异形</span> }, { n: 4, k: "截面宽度(mm)", v: "560", c: "g" }, { n: 5, k: "截面高度(mm)", v: "750", c: "g" },
  { n: 6, k: "轴线距梁左边线距", v: "(280)" }, { n: 7, k: "跨数量" }, { n: 8, k: "上部通长筋", v: <Rebar a="2" b="25" />, c: "b" }, { n: 9, k: "下部通长筋", v: <Rebar a="4" b="25" />, c: "b" }, { n: 10, k: "侧面构造或受扭筋", c: "b" },
  { n: 11, k: "其它箍筋", sel: true }, { n: 12, k: "备注" }, { n: 13, k: "其它属性", c: "g", exp: true }, { n: 21, k: "锚固搭接", c: "g", exp: true }, { n: 36, k: "显示样式", c: "g", exp: true },
];

function PropertyEditor() {
  return (
    <section role="dialog" aria-label="属性编辑器" className="absolute top-[98px] left-[1244px] flex h-[822px] w-[609px] flex-col border border-[#5a6a70] bg-[linear-gradient(#f0feff_0,#f0feff_50px,#20282e_76px,#3a4248_200px,#15181b_100%)] px-[5px] pb-[5px] shadow-[inset_0_0_0_1px_#e0e8ec,0_2px_8px_2px_rgba(0,0,0,0.4)]">
      <div className="flex h-[25px] shrink-0 items-center"><h2 className="flex-1 pl-0.5 text-xs">属性编辑器</h2>
        <button aria-label="关闭" className="flex h-[19px] w-[19px] items-center justify-center rounded-sm border border-[#777] bg-white/60"><svg viewBox="0 0 10 10" className="size-2.5"><path d="M1 1h3l1 1.500L6 1h3v3L7.500 5 9 6v3H6L5 7.500 4 9H1V6l1.500-1L1 4z" fill="#fff" stroke="#333" /></svg></button></div>
      <div className="min-h-0 flex-1 border border-[#333] bg-white p-px">
        <div className="h-full border-t border-r-2 border-l border-[#b0b0b0] pr-0.5">
          <table className="w-full table-fixed border-collapse">
            <thead><tr className="h-[23px]"><th className={`w-[21px] ${head}`} /><th className={`w-[121px] ${head}`}>属性名称</th><th className={hot}>属性值</th></tr></thead>
            <tbody>{rows.map((r) => (
              <tr key={r.n} className="h-[19px]">
                <td className={`border-r border-b border-[#c0c0c0] p-0 text-center leading-4 ${mono} ${r.sel ? "bg-[#ffd28c] text-[#6a0050]" : "bg-[linear-gradient(90deg,#fff,#ededed)]"}`}>{r.n}</td>
                <td className={`border-r border-b border-[#c0c0c0] p-0 leading-4 whitespace-nowrap ${r.sel ? "bg-[#3399ff] text-white" : r.c === "b" ? "text-[#0000ff]" : r.c === "g" ? "text-[#808080]" : ""}`}>
                  <div className="flex items-center"><span className="flex w-5 justify-center pr-1">{r.exp && <button aria-label="展开" className="flex size-3 items-center justify-center border border-[#a0a0a0] bg-[#eee]"><svg viewBox="0 0 8 8" className="size-2"><path d="M0 4h8M4 0v8" stroke="#000" /></svg></button>}</span>{r.k}</div></td>
                <td className={`border-r border-b border-[#c0c0c0] p-0 pl-0.5 leading-4 ${mono} ${r.sel ? "bg-[#e0efff]" : ""} ${r.c === "g" ? "text-[#808080]" : ""}`}>{r.v}</td>
              </tr>))}</tbody>
          </table>
        </div>
      </div>
    </section>
  );
}

function SpeedBall() {
  return (
    <div className="absolute top-[902px] left-[1727px] flex items-center">
      <div className="relative z-10 flex size-[47px] items-center justify-center rounded-full border-2 border-[#d8e4dc] bg-[linear-gradient(#1f7a4f_0,#2f9a60_28%,#55d068_30%,#45c860_100%)] pb-1 text-[15px] text-white shadow-[inset_0_0_0_2px_#1a8a48]">75%</div>
      <div className="-ml-5 flex h-[39px] w-[99px] items-center rounded-r-full border border-[#bbb] bg-[linear-gradient(#fff,#d8d8d8)] pl-[25px] text-[10px]">
        <div className="flex flex-col text-[11px] leading-[15px] font-bold"><span className="text-[#e05030]">↑</span><span className="text-[#189a50]">↓</span></div>
        <div className="flex flex-1 flex-col text-right leading-[15px] whitespace-nowrap"><span>2.7K/s</span><span>0.1K/s</span></div>
        <button aria-label="加速" className="relative mr-1.5 ml-1 flex size-4 items-center justify-center rounded-full bg-[#2f78d0]"><svg viewBox="0 0 10 10" className="size-2.5"><path d="M0 5h10M5 0v10" stroke="#fff" strokeWidth="1.800" /></svg><i className="absolute -top-1 -right-1 size-2 rounded-full bg-[#d83030]" /></button>
      </div>
    </div>
  );
}

function Spin({ label, v, w }: { label: string; v: string; w: string }) {
  return (
    <span className={`flex h-5 shrink-0 items-center border border-white ${w}`}>
      <input aria-label={label} disabled value={v} readOnly className="h-[18px] w-0 flex-1 bg-transparent text-right text-[#808080]" />
      <span className="mr-1 ml-2 flex flex-col gap-1.5"><i className="border-x-[3px] border-b-[3px] border-x-transparent border-b-[#999]" /><i className="border-x-[3px] border-t-[3px] border-x-transparent border-t-[#999]" /></span>
    </span>
  );
}

function BottomTools() {
  return (
    <div className="flex h-[31px] shrink-0 bg-[#f0f0f0]">
      <div className={`${bar} h-[29px] border-r border-r-[#a0a0a0] pl-px`}>
        <Grip /><Tool i="ortho" t="正交" /><Tool i="snap" t="对象捕捉" pressed /><Tool i="dyn" t="动态输入" pressed />
        <Edge /><Grip /><Tool i="cross" t="交点" /><Tool i="perp" t="垂点" pressed /><Tool i="mid" t="中点" pressed /><Tool i="vertex" t="顶点" /><Tool i="coord" t="坐标" />
        <Edge /><Grip /><Combo label="偏移方式" options={["不偏移"]} w="w-14" /><Sep />
        <span className="w-5 text-[#999]">X=</span><Spin label="X" v="0" w="w-14" /><span className="w-[29px] pl-[3px] text-[#999]">mm</span>
        <span className="w-5 text-[#999]">Y=</span><Spin label="Y" v="0" w="w-14" /><span className="w-7 pl-[3px] text-[#999]">mm</span>
        <Sep /><label className="flex w-[49px] items-center gap-2"><input type="checkbox" className="size-3 appearance-none border border-[#8e8f8f] bg-white" />旋转</label>
        <Spin label="旋转角度" v="0.000" w="w-[65px]" /><span className="w-3 pl-1 text-[#999]">°</span>
      </div>
    </div>
  );
}

function StatusBar() {
  const c = "h-[19px] border-t border-l border-[#a0a0a0] pl-px leading-[18px] whitespace-nowrap";
  return (
    <footer className="flex h-[21px] shrink-0 items-start gap-[3px] border-t border-white bg-[#f0f0f0]">
      <span className={`${c} w-[147px] ${mono}`}>X=10518 Y=11476</span><span className={`${c} w-[77px]`}>层高:4.8m</span><span className={`${c} w-[97px]`}>底标高:10.57m</span><span className={`${c} w-12 ${mono}`}>1(1)</span><span className={`${c} flex-1`}>在此处添加该构件的特殊箍筋</span><span className={`${c} w-[70px] ${mono}`}>672.9 FPS</span>
    </footer>
  );
}

const app: Record<string, ReactNode> = {
  chrome: (<><circle cx="16" cy="16" r="15" fill="#fbc116" /><path d="M16 1A15 15 0 0 1 29 8.500H16A7.500 7.500 0 0 0 9 13L3 8.500A15 15 0 0 1 16 1z" fill="#e33b2e" /><path d="M3 8.500L9.500 19.500Q12 23.500 16 23.500L13 30.700A15 15 0 0 1 3 8.500z" fill="#2a9c49" /><circle cx="16" cy="16" r="7" fill="#fff" /><circle cx="16" cy="16" r="5.500" fill="#3a7df0" /></>),
  baidu: (<><rect x="0" y="0" width="32" height="32" rx="5" fill="#fff" /><g fill="none" strokeWidth="3.200"><circle cx="16" cy="10" r="5" stroke="#2468f0" /><circle cx="10" cy="19" r="5" stroke="#2468f0" /><circle cx="22" cy="19" r="5" stroke="#2468f0" /></g><path d="M12 16l4-2 4 4" stroke="#e83a40" strokeWidth="2.500" fill="none" /><path d="M10 29h6v3h-6z" fill="#e83a40" /><path d="M16 29h6v3h-6z" fill="#2468f0" /></>),
  folder: (<><path d="M6 3l10 4v24L6 27z" fill="#e9c95c" stroke="#a88628" /><path d="M16 7l10-4v22l-10 6z" fill="#fbeeb0" stroke="#b89a3a" /><path d="M20 5v22" stroke="#fff" strokeWidth="2" /></>),
  wechat: (<><ellipse cx="12" cy="12" rx="11" ry="9.500" fill="#7ed03c" /><path d="M5 19l-1 5 6-3z" fill="#7ed03c" /><circle cx="8" cy="10" r="1.500" fill="#234" /><circle cx="15" cy="10" r="1.500" fill="#234" /><ellipse cx="22" cy="21" rx="9" ry="7.500" fill="#f4f4f4" /><path d="M25 27l3 4-7-2z" fill="#f4f4f4" /><circle cx="19" cy="19" r="1.200" fill="#345" /><circle cx="25" cy="19" r="1.200" fill="#345" /></>),
  photo: (<><rect x="2" y="5" width="28" height="22" fill="#f4f9ff" /><rect x="4" y="7" width="24" height="18" fill="#5aaef0" /><path d="M4 13q10-6 24 1v-7H4z" fill="#bfe0fa" /><path d="M4 19l9-4 15 5v5H4z" fill="#1f7a70" /><path d="M1 10V3h8M23 3h8v7M31 22v7h-8M9 29H1v-7" stroke="#2f86d8" strokeWidth="2.500" fill="none" /></>),
  cad: (<><rect width="32" height="32" fill="url(#cadg)" /><path d="M16 3L5 26l6-2 5-3 5 3 6 2z" fill="#b81c10" /><path d="M16 3l-4 15 4 3 4-3z" fill="#6a0c08" /><path d="M5 26l7-8 4 3 4-3 7 8-7-2-4 1-4-1z" fill="#e03a28" /><path d="M14 24l2-4 2 4z" fill="#f8a8a0" /></>),
  ggj: (<><rect width="32" height="32" rx="6" fill="#29a9f8" /><rect x="0" y="0" width="32" height="14" rx="6" fill="#1f84e0" /><path d="M20 6q-4-3-4 3v12q0 7-6 4M4 16h24M4 16q0 4 4 4M28 16q0-4-4-4" stroke="#e8f8ff" strokeWidth="2.500" fill="none" /></>),
};
const AppIcon = ({ n }: { n: string }) => <svg viewBox="0 0 32 32" className="size-8 shrink-0">{app[n]}</svg>;

function TaskBtn({ i, t, active, join }: { i: string; t: string; active?: boolean; join?: boolean }) {
  return (
    <button className={`flex h-[38px] w-32 shrink-0 items-center gap-[5px] overflow-hidden rounded-[3px] border border-black/60 pl-[7px] text-[13px] text-white shadow-[inset_0_0_0_1px_rgba(255,255,255,0.35)] ${join ? "" : "ml-[3px]"} ${active ? "bg-[linear-gradient(160deg,#d4dfea,#8fa6c0_50%,#6d93bd)]" : "bg-[linear-gradient(165deg,#a8b4c2_0%,#66798e_45%,#3b6591_100%)]"}`}>
      <AppIcon n={i} /><span className="whitespace-nowrap">{t}</span>
    </button>
  );
}

function TaskBar() {
  return (
    <nav className="flex h-10 shrink-0 items-center border-t border-[#101c28] bg-[linear-gradient(#5c7389_0%,#47637f_45%,#245580_100%)]">
      <button aria-label="开始" className="ml-2 flex size-9 items-center justify-center rounded-full border border-[#9cc4dc] bg-[radial-gradient(circle_at_50%_90%,#5cc8f0,#1f5f90_50%,#5a86a4_90%)]">
        <svg viewBox="0 0 24 24" className="size-6"><path d="M3 6q4-3 8-1l-1.500 6q-4-2-8 1z" fill="#e8562a" /><path d="M12.500 5.500q4 2 8.500-1l-1.500 6.500q-4 3-8.500 1z" fill="#86c43a" /><path d="M1 13q4-3 8-1l-1.500 6.500q-4-2-8 1z" fill="#3c9ae8" transform="translate(0 -0.500)" /><path d="M11 12.500q4 2 8.500-1L18 18q-4 3-8.500 1z" fill="#fbc62c" /></svg></button>
      <button aria-label="浏览器" className="ml-5"><svg viewBox="0 0 42 36" className="h-9 w-[42px]"><path d="M27 6Q14 1 7 10Q0 20 7 28q9 8 20 2q5-5 5-14H18q6 1 7 6-4 6-10 2-6-5-2-11 4-6 14-7z" fill="#2a9ae8" stroke="#7ad0ff" strokeWidth="0.700" /><path d="M26 13q3-2 3-8 1-4 5-4t5 4q0 6 3 8zM32 14h4v2h-4z" fill="#f5b21c" /></svg></button>
      <button aria-label="显示桌面" className="ml-6"><svg viewBox="0 0 32 24" className="h-6 w-8"><rect x="0.500" y="0.500" width="31" height="23" fill="#2f78e8" stroke="#d0dce8" /><path d="M1 1h30L1 16z" fill="#6aa4f8" /><path d="M1 20h30v3H1z" fill="#203850" /></svg></button>
      <button aria-label="窗口切换" className="ml-7"><svg viewBox="0 0 32 24" className="h-6 w-8"><rect x="0.500" y="0.500" width="31" height="23" fill="#28343e" stroke="#a0acb8" /><path d="M4 4h9v12H4zM10 6h9v12h-9zM17 7h9v12h-9z" fill="#3f9a7a" stroke="#e8f0f4" strokeWidth="1.500" /></svg></button>
      <span className="w-[13px]" />
      <TaskBtn i="chrome" t="老师 这个东..." />
      <span className="w-3.5" /><button aria-label="百度网盘"><AppIcon n="baidu" /></button><span className="w-3" />
      <TaskBtn i="folder" t="签证单" /><TaskBtn i="folder" t="塔吊基础签..." join />
      <TaskBtn i="wechat" t="微信" />
      <TaskBtn i="photo" t="二层板 - Wi..." /><TaskBtn i="photo" t="屋面板 - Wi..." join />
      <TaskBtn i="cad" t="报告厅结施_..." /><TaskBtn i="cad" t="报告厅施工..." join /><TaskBtn i="cad" t="保安镇小学..." join />
      <TaskBtn i="ggj" t="广联达—钢..." active />
      <div className="flex h-full min-w-0 flex-1 items-center justify-end gap-2 bg-[#1b4a80]/80 text-white">
        <svg viewBox="0 0 16 16" className="mr-4 size-4"><rect x="0.500" y="6" width="15" height="8" fill="#ccc" stroke="#eee" /><path d="M2 8.500h12M2 11h12" stroke="#555" strokeDasharray="1.500 1" /><path d="M8 6q0-4 5-4" stroke="#ddd" fill="none" /></svg>
        <svg viewBox="0 0 16 16" className="size-4"><rect width="16" height="16" rx="2" fill="#fff" /><path d="M3 12q-2-4 2-5 1-4 5-3 3 1 3 4 2 3-1 4zM6 12l4-4" stroke="#2f78e0" strokeWidth="1.500" fill="none" /></svg>
        <svg viewBox="0 0 32 32" className="size-4">{app.wechat}</svg>
        <svg viewBox="0 0 36 34" className="size-4"><path d="M27 6Q14 1 7 10Q0 20 7 28q9 8 20 2q5-5 5-14H18q6 1 7 6-4 6-10 2-6-5-2-11 4-6 14-7z" fill="#3aa8f4" /></svg>
        <svg viewBox="0 0 16 16" className="size-4"><circle cx="8" cy="8" r="7.500" fill="#f8d81c" /><path d="M8 .5a7.500 7.500 0 0 1 0 15z" fill="#5fb83a" /><path d="M8 4v8M4 8h8" stroke="#111" strokeWidth="2.500" /></svg>
        <svg viewBox="0 0 16 16" className="size-4"><rect width="14" height="13" rx="2" fill="#2f9ae8" /><path d="M7 2v8M3 4l8 4M11 4L3 8" stroke="#fff" strokeWidth="1.600" /><circle cx="12" cy="12" r="4" fill="#f08a30" /><path d="M10 11h4M10 13h4" stroke="#fff" /></svg>
        <svg viewBox="0 0 16 16" className="size-4"><path d="M2 1v14" stroke="#fff" strokeWidth="1.500" /><path d="M3 2h9v7H3z" fill="#fff" /><circle cx="11.500" cy="11" r="4.500" fill="#e03024" /><path d="M9.500 9l4 4M13.500 9l-4 4" stroke="#fff" strokeWidth="1.400" /></svg>
        <svg viewBox="0 0 16 16" className="size-4"><path d="M1 12h2v2H1zM4 10h2v4H4zM7 8h2v6H7zM10 5.500h2V14h-2zM13 3h2v11h-2z" fill="#fff" /></svg>
        <svg viewBox="0 0 16 16" className="size-4"><path d="M1 5h3l4-4v14l-4-4H1z" fill="#fff" /><path d="M10 5q2 3 0 6M12.500 3q3 5 0 10" stroke="#fff" fill="none" strokeWidth="1.200" /></svg>
        <div className="ml-1 w-[68px] text-center text-xs leading-[18px]"><div>16:04</div><div>2018/11/26</div></div>
        <button aria-label="显示桌面" className="h-full w-3.5 border border-[#0c2440] bg-white/20" />
      </div>
    </nav>
  );
}

export default function App() {
  return (
    <div className='relative flex h-screen w-full flex-col overflow-hidden bg-[#f0f0f0] font-["Open_Sans","Noto_Sans_CJK_SC",sans-serif] text-xs text-black'>
      <svg className="absolute h-0 w-0" aria-hidden="true"><defs>
        <linearGradient id="sqg" x2="1" y2="1"><stop stopColor="#c4d8fb" /><stop offset="1" stopColor="#4f82e0" /></linearGradient>
        <linearGradient id="fog" x2="1" y2="1"><stop stopColor="#fff0a8" /><stop offset="1" stopColor="#e0a83a" /></linearGradient>
        <linearGradient id="cadg" x1="1" x2="0" y2="1"><stop stopColor="#fff4f2" /><stop offset="1" stopColor="#f04438" /></linearGradient>
      </defs></svg>
      <TitleBar />
      <div className={`${bar} h-[27px] shrink-0 gap-[11px] pl-[5px] font-["Noto_Sans","Noto_Sans_CJK_SC",sans-serif]`}>
        <span className="-mr-1.5 h-6 w-0.5 border-r border-r-[#a0a0a0] bg-white" />
        {menus.map((m) => <button key={m} className="whitespace-nowrap">{m}</button>)}
        <Icon n="worker" />
      </div>
      <div className="flex h-[30px] shrink-0">
        <div className={`${bar} h-[29px] border-r border-r-[#a0a0a0] pr-px`}>
          <Grip />
          <Tool i="new" /><Tool i="open" arrow /><Tool i="save" /><Sep /><Tool i="undo" arrow /><Tool i="redo" arrow off /><Edge /><Grip />
          <Tool i="define" t="定义" /><Tool i="sigma" t="汇总计算" /><Tool i="flat" t="平齐板顶" /><Tool i="find" t="查找图元" /><Tool i="glasses" t="查看钢筋量" /><Tool i="batchsel" t="批量选择" off /><Tool i="grid3d" t="钢筋三维" /><Tool i="lock" t="锁定" /><Tool i="unlock" t="解锁" /><Tool i="broom" t="批量删除未使用构件" />
          <Edge /><Grip />
          <div className="mr-1.5 flex h-[22px] items-center bg-white pl-[3px]"><Icon n="square" /><Combo label="视图模式" options={["二维"]} w="w-10" gap="mr-0" /></div>
          <Tool i="cube" t="俯视" arrow /><Tool i="orbit" t="动态观察" /><Tool i="part3d" t="局部三维" /><Sep /><Tool i="full" t="全屏" /><Tool i="zoom" t="缩放" arrow /><Tool i="pan" t="平移" arrow /><Tool i="rotscr" t="屏幕旋转" arrow tight /><Sep /><Tool i="floors" t="选择楼层" /><Tool i="wire" t="线框" />
        </div>
      </div>
      <div className="flex min-h-0 flex-1">
        <NavPanel />
        <ListPanel />
        <main className="flex min-w-0 flex-1 flex-col">
          <div className="flex h-7 shrink-0">
            <div className={`${bar} h-[27px] border-r border-r-[#a0a0a0]`}>
              <Grip />
              <Tool i="broom" t="删除" /><Sep /><Tool i="copy" t="复制" /><Tool i="mirror" t="镜像" /><Sep /><Tool i="move" t="移动" /><Tool i="rotate" t="旋转" /><Sep /><Tool i="extend" t="延伸" /><Tool i="trim" t="修剪" /><Sep /><Tool i="brk" t="打断" /><Tool i="merge" t="合并" /><Tool i="split" t="分割" off /><Sep /><Tool i="align" t="对齐" arrow tight /><Tool i="offset" t="偏移" /><Tool i="stretch" t="拉伸" /><Sep /><Tool i="grip" t="设置夹点" off />
            </div>
          </div>
          <div className={`${bar} h-7 shrink-0 overflow-hidden`}>
            <Grip />
            <Combo label="楼层" options={["屋面"]} w="w-[55px]" /><Combo label="构件大类" options={["梁"]} w="w-[67px]" /><Combo label="构件类型" options={["梁"]} w="w-[67px]" /><Combo label="构件" options={["WJL"]} w="w-[67px]" /><Combo label="分层" options={["分层1"]} w="w-[68px]" /><Sep />
            <Tool i="prop" t="属性" pressed /><Tool i="editbar" t="编辑钢筋" /><Tool i="list" t="构件列表" pressed /><Tool i="pick" t="拾取构件" /><Edge /><Grip />
            <Tool i="two" t="两点" /><Tool i="parallel" t="平行" /><Tool i="angle" t="点角" arrow /><Tool i="arcaxis" t="三点辅轴" arrow /><Tool i="delaxis" />
          </div>
          <div className={`${bar} h-[29px] shrink-0 overflow-hidden`}>
            <Grip />
            <Tool i="cursor" t="选择" arrow /><Sep /><Tool i="line" t="直线" pressed /><Tool i="ptlen" t="点加长度" /><Tool i="arc" t="三点画弧" arrow /><Combo label="画法" options={[""]} w="w-[54px]" /><Tool i="square" t="矩形" /><Sep /><Tool i="smart" t="智能布置" arrow tight /><Sep />
            <Tool i="modbeam" t="修改梁段属性" /><Tool i="note" t="原位标注" arrow tight /><Tool i="respan" t="重提梁跨" arrow tight /><Tool i="paint" t="梁跨数据复制" arrow tight /><Tool i="recog" t="批量识别" />
            <span className="flex-1" /><button aria-label="更多" className="pr-1 text-sm leading-4 font-bold">»</button>
          </div>
          <Canvas />
          <BottomTools />
        </main>
      </div>
      <StatusBar />
      <TaskBar />
      <StirrupDialog />
      <ShapeDialog />
      <PropertyEditor />
      <SpeedBall />
    </div>
  );
}
